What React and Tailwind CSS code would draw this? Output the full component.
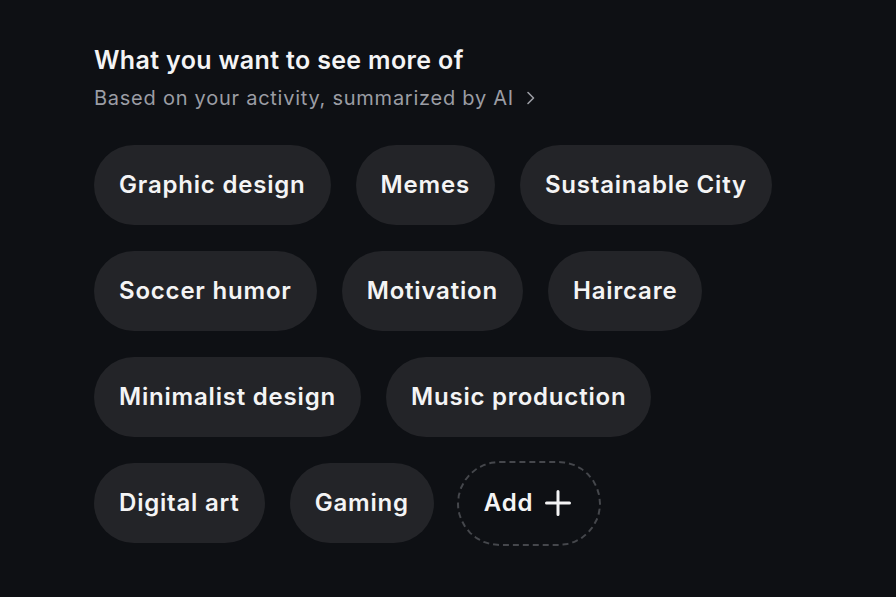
import React from "react";

const rows = [
  ["Graphic design", "Memes", "Sustainable City"],
  ["Soccer humor", "Motivation", "Haircare"],
  ["Minimalist design", "Music production"],
  ["Digital art", "Gaming"],
];

function Pill({ label }) {
  return (
    <div className="h-[80px] px-[25px] flex items-center rounded-full bg-[#232428] text-[24px] tracking-[0.8px] font-semibold text-[#f4f4f5] whitespace-nowrap">
      {label}
    </div>
  );
}

export default function App() {
  return (
    <div
      className="w-[896px] h-[597px] bg-[#0e1014] pl-[94px] pt-[44px] overflow-hidden"
      style={{ fontFamily: "Inter, 'Noto Sans', sans-serif" }}
    >
      <div className="text-[25px] leading-[32px] tracking-[0.35px] font-semibold text-[#f4f4f5]">
        What you want to see more of
      </div>
      <div className="mt-[8px] flex items-center text-[20px] leading-[28px] tracking-[0.75px] text-[#9b9da4]">
        <span>Based on your activity, summarized by AI</span>
        <svg className="ml-[12px]" width="10" height="16" viewBox="0 0 10 16" fill="none">
          <path d="M2 2.5 L7.5 8 L2 13.5" stroke="#9b9da4" strokeWidth="1.6" strokeLinecap="round" strokeLinejoin="round" />
        </svg>
      </div>
      <div className="mt-[33px] flex flex-col gap-[26px]">
        {rows.map((row, i) => (
          <div key={i} className="flex items-center gap-[25px]">
            {row.map((l) => (
              <Pill key={l} label={l} />
            ))}
            {i === 3 && (
              <div className="h-[85px] -my-[2.5px] pl-[25px] pr-[28px] flex items-center gap-[12px] rounded-full border-2 border-dashed border-[#45474c] text-[24px] tracking-[0.8px] font-semibold text-[#f4f4f5] -ml-[2px]">
                <span>Add</span>
                <svg width="26" height="26" viewBox="0 0 26 26" fill="none">
                  <path d="M13 1.5 V24.5 M1.5 13 H24.5" stroke="#f4f4f5" strokeWidth="3" strokeLinecap="round" />
                </svg>
              </div>
            )}
          </div>
        ))}
      </div>
    </div>
  );
}
